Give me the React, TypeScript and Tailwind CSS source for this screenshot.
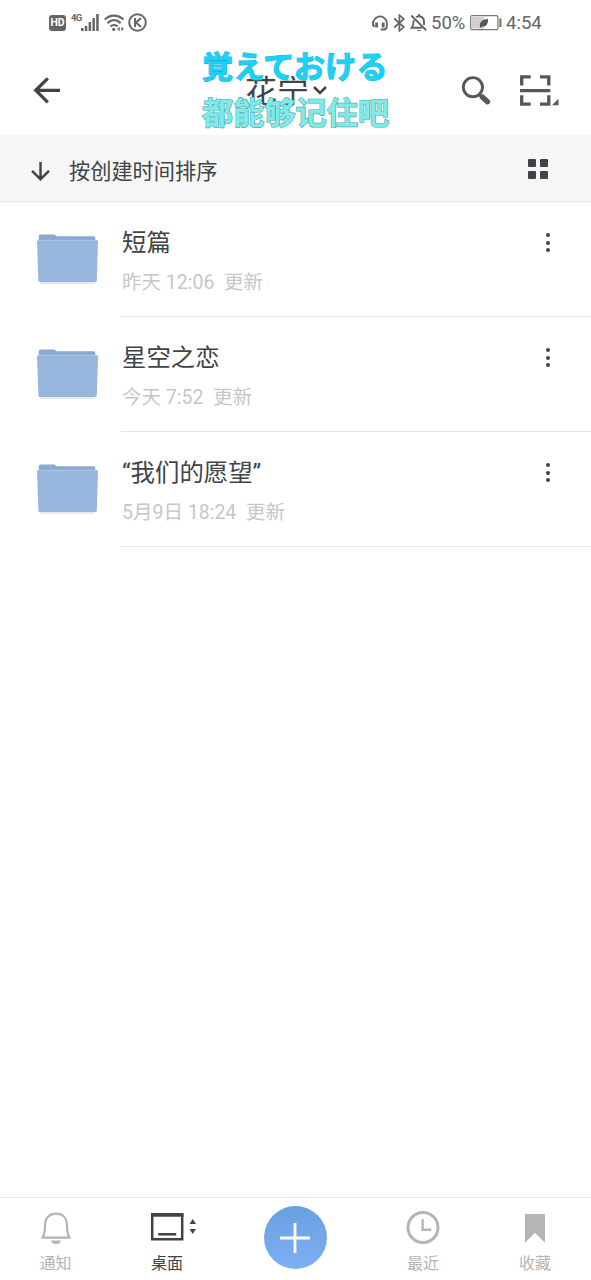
import React from 'react';

interface FolderItem {
  name: string;
  updated: string;
}

const folders: FolderItem[] = [
  { name: '短篇', updated: '昨天 12:06' },
  { name: '星空之恋', updated: '今天 7:52' },
  { name: '“我们的愿望”', updated: '5月9日 18:24' },
];

const StatusBar: React.FC = () => (
  <div className="flex h-[45px] shrink-0 items-center pl-[49px] pr-[48px] text-[#656565]">
    <div className="flex h-[16px] w-[17px] items-center justify-center rounded-[3px] bg-[#656565] pt-px font-['Roboto',sans-serif] text-[10.5px] font-bold leading-none text-white">
      HD
    </div>
    <div className="ml-[5px] -mt-[10px] h-[10px] w-[10px] font-['Roboto',sans-serif] text-[9.5px] font-bold leading-[10px] tracking-[-0.8px]">4G</div>
    <svg className="h-[18px] w-[18px]" viewBox="0 0 18 18" fill="currentColor">
      <path d="M0 14h2.5v3H0zM3.8 12h2.5v5H3.8zM7.6 8h2.5v9H7.6zM11.4 4h2.5v13h-2.5zM15.2 0h2.5v17h-2.5z" />
    </svg>
    <svg className="ml-[5px] h-[18px] w-[22px]" viewBox="0 0 22 18" fill="none" stroke="currentColor" strokeWidth="2.2">
      <path d="M.7 5.5C6 .2 14 .2 19.5 5.5M3.5 9.2C7.5 5.2 12.7 5.2 16.7 9.2M6.5 12.5c2-2 5.2-2 7.2 0" />
      <circle cx="9.7" cy="15.3" r="1.6" fill="currentColor" stroke="none" />
      <path d="M15.7 12.8v4.4l-2.6-2.2zM17.3 12.8v4.4l2.6-2.2z" fill="currentColor" stroke="none" />
    </svg>
    <svg className="ml-[1.5px] h-[19px] w-[19px]" viewBox="0 0 19 19" fill="none" stroke="currentColor" strokeWidth="2">
      <circle cx="9.5" cy="9.5" r="8.3" />
      <path d="M7 5v9M13 5l-5 4.6L13 14" />
    </svg>

    <svg className="ml-auto h-[17px] w-[16px]" viewBox="0 0 16 17" fill="none" stroke="currentColor" strokeWidth="1.8">
      <path d="M2.3 13A6.8 6.8 0 1 1 14.8 9v3.5c0 2-1 3-3 3H8.7" />
      <path d="M4.6 8.5v5M11.2 8.5v5" strokeWidth="2.8" />
      <path d="M1 7v5" />
    </svg>
    <svg className="ml-[5px] h-[18px] w-[13px]" viewBox="0 0 13 18" fill="none" stroke="currentColor" strokeWidth="1.7">
      <path d="M1.2 4.5l9.6 8.6-4.4 3.7V1.2l4.4 3.7-9.6 8.6" />
    </svg>
    <svg className="ml-[4px] h-[18px] w-[18px]" viewBox="0 0 18 18" fill="none" stroke="currentColor" strokeWidth="1.9">
      <path d="M1.2 1.5l15 14.7M6 3.2C10 .7 14 3.5 14 7.5V11M3.7 6.2C3.4 9.5 3.2 12 1.7 13.8H12M9 0v2" />
      <path d="M7 16h4c-.6 1.6-3.4 1.6-4 0z" fill="currentColor" stroke="none" />
    </svg>
    <span className="ml-[3px] mt-[2px] w-[35px] whitespace-nowrap font-['Roboto',sans-serif] text-[18.5px] leading-none">50%</span>
    <svg className="ml-[4px] h-[16px] w-[32px]" viewBox="0 0 32 16">
      <rect x=".7" y=".7" width="27.2" height="14" rx="1.5" fill="#fff" stroke="#777" strokeWidth="1.2" />
      <path d="M2 2h12v11.5H2z" fill="#cfcfcf" />
      <path d="M10 12c-1-5 3-8 8-8 .3 5-2 8-6 7.5L10.5 13z" fill="#555" />
      <path d="M30.4 3.5v8.5" stroke="#777" strokeWidth="2.2" />
    </svg>
    <span className="ml-[4px] mt-[2px] w-[37px] whitespace-nowrap font-['Roboto',sans-serif] text-[18.5px] leading-none">4:54</span>
  </div>
);

const Header: React.FC = () => (
  <header className="relative flex h-[90px] shrink-0 items-center pl-[33px] pr-[32px] text-[#404447]">
    <svg className="h-[28px] w-[28px]" viewBox="0 0 28 28" fill="none" stroke="currentColor" strokeWidth="3.3">
      <path d="M27 14.3H3M14.8 2.3L2.8 14.3l12 12" />
    </svg>
    <div className="ml-[184px] flex items-center">
      <h1 className="-mt-[2px] whitespace-nowrap text-[32px] leading-[40px]">花宁</h1>
      <svg className="ml-[4px] h-[10px] w-[14px]" viewBox="0 0 14 10" fill="none" stroke="currentColor" strokeWidth="2.5">
        <path d="M1 2l6 6 6-6" />
      </svg>
    </div>
    <svg className="ml-auto h-[31px] w-[31px] text-[#55585a]" viewBox="0 0 31 31" fill="none" stroke="currentColor">
      <circle cx="11.9" cy="12.2" r="9.6" strokeWidth="2.9" />
      <path d="M18 19l4 4" strokeWidth="3" />
      <path d="M21.3 22l5.2 4.7" strokeWidth="5.4" strokeLinecap="round" />
    </svg>
    <svg className="ml-[28px] h-[31px] w-[39px] text-[#55585a]" viewBox="0 0 39 31" fill="none" stroke="currentColor" strokeWidth="3.3">
      <path d="M1.7 10.5V1.8h9M20 1.8h8.8v8.7M1.7 20.3v8.9h9M20 29.2h8.8v-8.9M0 15.6h30.3" />
      <path d="M38.5 23.7v6.5H32z" fill="currentColor" stroke="none" />
    </svg>

    {/* Floating lyrics */}
    <div className="absolute left-[202px] top-[-3px] whitespace-nowrap text-[31.2px] font-bold leading-[46px]">
      <p className="font-['Noto_Sans_CJK_JP',sans-serif] tracking-[0.2px] text-[#18d3f8] [-webkit-text-stroke:1px_#1caecb] [paint-order:stroke_fill]">覚えておける</p>
      <p className="text-[#7eeaea] [-webkit-text-stroke:1.2px_#4fa3a3] [paint-order:stroke_fill]">都能够记住吧</p>
    </div>
  </header>
);

const FolderIcon: React.FC = () => (
  <svg className="h-[54px] w-[65px] shrink-0" viewBox="0 0 65 54">
    <path d="M5 49h55v2H5z" fill="#e6eaf0" />
    <path d="M3.8 14V3.2Q3.8 1.5 5.5 1.5H19.5l2.5 1.7h36.6q1.7 0 1.7 1.6V14z" fill="#89a9cf" />
    <path d="M3.5 6.9h58q1.5 0 1.5 1.5l-1.2 39.1q0 1.6-1.6 1.6H5q-1.6 0-1.6-1.6L2 8.4q0-1.5 1.5-1.5z" fill="#98b5dd" />
    <path d="M3.2 7.4h58.6" stroke="#aec7e8" />
  </svg>
);

const FolderRow: React.FC<{ folder: FolderItem }> = ({ folder }) => (
  <li className="flex h-[115px] pl-[35px]">
    <div className="w-[86px] pt-[31px]">
      <FolderIcon />
    </div>
    <div className="flex h-full flex-1 border-b border-[#e4e4e4]">
      <div className="flex-1 whitespace-nowrap pl-[1px] pt-[23px]">
        <h2 className="font-['Roboto','Noto_Sans_CJK_SC',sans-serif] text-[24.4px] leading-[36px] text-[#404447]">{folder.name}</h2>
        <p className="mt-[7px] whitespace-pre font-['Roboto','Noto_Sans_CJK_SC',sans-serif] text-[19.5px] leading-[30px] text-[#c6c7c8]">{folder.updated}{'  '}更新</p>
      </div>
      <button className="mr-[40px] mt-[31px] flex h-[19px] w-[6px] flex-col items-center justify-between">
        <span className="h-[4px] w-[4px] rounded-full bg-[#404447]" />
        <span className="h-[4px] w-[4px] rounded-full bg-[#404447]" />
        <span className="h-[4px] w-[4px] rounded-full bg-[#404447]" />
      </button>
    </div>
  </li>
);

const BottomNav: React.FC = () => (
  <nav className="flex h-[83px] shrink-0 border-t border-[#e8e8e8] text-[16px] leading-[24px] text-[#b3b5b7]">
    <div className="flex w-[111px] flex-col items-center pt-[14px]">
      <svg className="h-[34px] w-[30px]" viewBox="0 0 30 34" fill="none" stroke="currentColor" strokeWidth="2.2">
        <path d="M1.8 25.6c1.8-3.5 2.2-7 2.2-12.5C4 5.8 8.5 1.7 15 1.7s11 4.1 11 11.4c0 5.5.4 9 2.2 12.5z" />
        <path d="M10 28.4h10c-.8 5-9.2 5-10 0z" fill="currentColor" stroke="none" />
      </svg>
      <span className="mt-[4px]">通知</span>
    </div>
    <div className="flex w-[112px] flex-col items-center pt-[14px] text-[#404447]">
      <svg className="ml-[13px] h-[34px] w-[47px]" viewBox="0 0 47 34">
        <path d="M2.2 2.7h30v24.6h-30z" fill="none" stroke="currentColor" strokeWidth="2.5" />
        <path d="M1 1h32.5v3.7H1zM8.2 21h18v2.6h-18zM39.5 12l3.2-5L46 12zM39.5 17l3.2 5 3.3-5z" fill="currentColor" />
      </svg>
      <span className="mt-[4px]">桌面</span>
    </div>
    <div className="flex w-[144px] justify-center pt-[8px]">
      <button className="flex h-[63px] w-[63px] items-center justify-center rounded-full bg-gradient-to-b from-[#699fe0] to-[#7caff4]">
        <svg className="h-[30px] w-[30px]" viewBox="0 0 30 30" fill="none" stroke="white" strokeWidth="2.8">
          <path d="M15 0v30M0 15h30" />
        </svg>
      </button>
    </div>
    <div className="flex w-[112px] flex-col items-center pt-[13px]">
      <svg className="h-[34px] w-[34px]" viewBox="0 0 34 34" fill="none" stroke="currentColor" strokeWidth="3">
        <circle cx="17" cy="16.5" r="15" />
        <path d="M16.6 8.2v10.6H25.2" strokeWidth="2.4" />
      </svg>
      <span className="mt-[5px]">最近</span>
    </div>
    <div className="flex w-[112px] flex-col items-center pt-[14px]">
      <svg className="h-[34px] w-[22px]" viewBox="0 0 22 34" fill="currentColor">
        <path d="M1 2h20v28.7L11 20.8 1 30.7z" />
      </svg>
      <span className="mt-[4px]">收藏</span>
    </div>
  </nav>
);

const App: React.FC = () => {
  return (
    <div className="flex h-screen w-full flex-col overflow-hidden bg-white font-['Noto_Sans_CJK_SC',sans-serif]">
      <StatusBar />
      <Header />

      {/* Sort bar */}
      <div className="flex h-[67px] shrink-0 items-center border-b border-[#e6e6e6] bg-[#f6f6f6] pl-[31px] pr-[43px] pt-[3px] text-[#404447]">
        <svg className="mt-[2px] h-[20px] w-[19px]" viewBox="0 0 19 20" fill="none" stroke="currentColor" strokeWidth="2.4">
          <path d="M9.5 1v17M1 9.8l8.5 8.4L18 9.8" />
        </svg>
        <span className="ml-[19px] whitespace-nowrap text-[21.2px] leading-[32px]">按创建时间排序</span>
        <button className="-mt-[2px] ml-auto grid grid-cols-2 gap-x-[4px] gap-y-[4px]">
          <span className="h-[8px] w-[8px] rounded-[1px] bg-[#404447]" />
          <span className="h-[8px] w-[8px] rounded-[1px] bg-[#404447]" />
          <span className="h-[8px] w-[8px] rounded-[1px] bg-[#404447]" />
          <span className="h-[8px] w-[8px] rounded-[1px] bg-[#404447]" />
        </button>
      </div>

      <ul className="flex-1">
        {folders.map((folder) => (
          <FolderRow key={folder.name} folder={folder} />
        ))}
      </ul>

      <BottomNav />
    </div>
  );
};

export default App;
